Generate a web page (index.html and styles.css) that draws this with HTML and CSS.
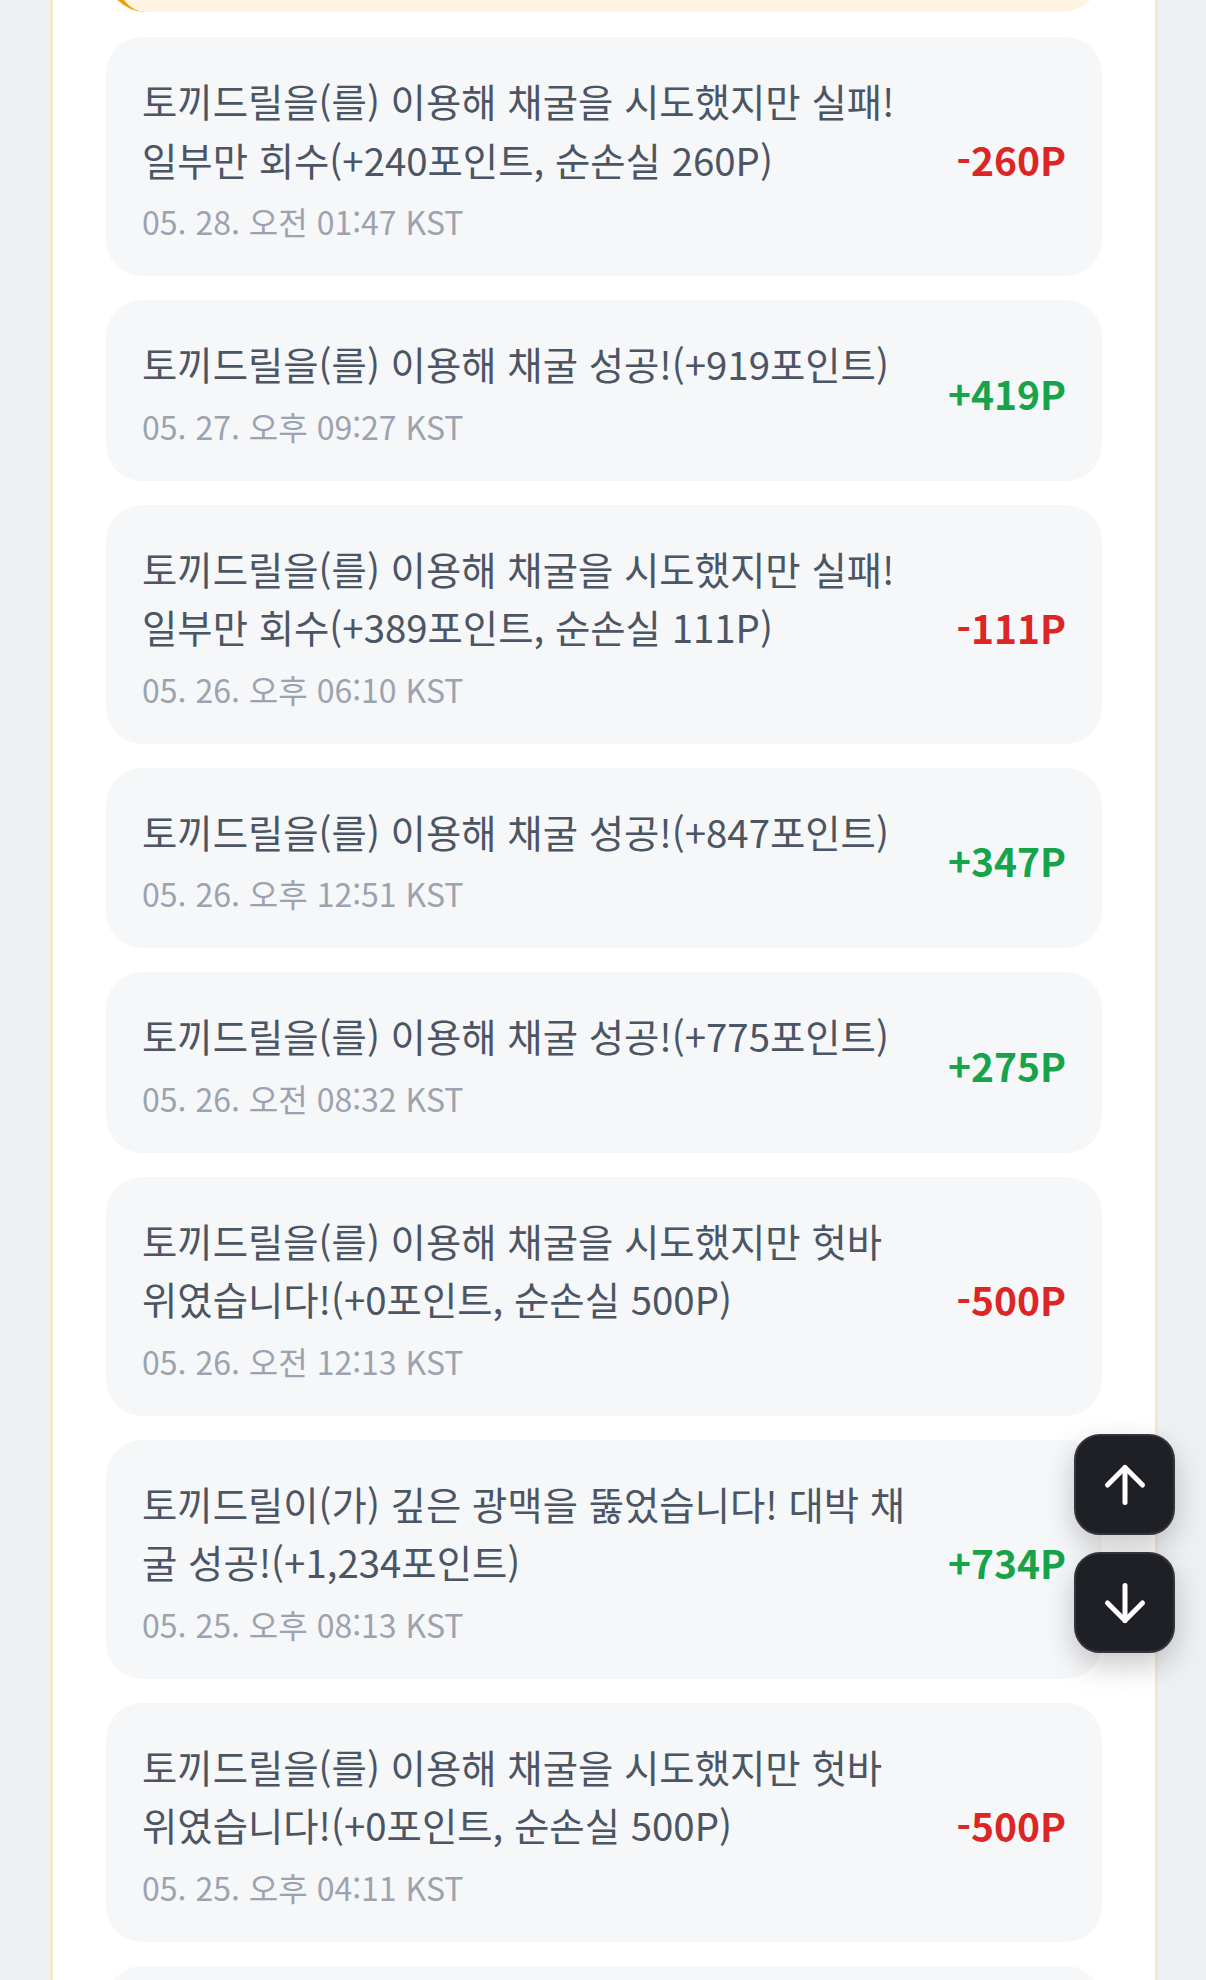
FILE: index.html
```html
<!DOCTYPE html>
<html lang="ko">
<head>
<meta charset="utf-8">
<title>채굴 기록</title>
<link rel="stylesheet" href="styles.css">
</head>
<body>
<div class="panel">
  <div class="summary"></div>
  <ul class="log">
    <li class="item">
      <div class="info">
        <p class="msg">토끼드릴을(를) 이용해 채굴을 시도했지만 실패! 일부만 회수(+240포인트, 순손실 260P)</p>
        <p class="time">05. 28. 오전 01:47 KST</p>
      </div>
      <span class="amount minus">-260P</span>
    </li>
    <li class="item">
      <div class="info">
        <p class="msg">토끼드릴을(를) 이용해 채굴 성공!(+919포인트)</p>
        <p class="time">05. 27. 오후 09:27 KST</p>
      </div>
      <span class="amount plus">+419P</span>
    </li>
    <li class="item">
      <div class="info">
        <p class="msg">토끼드릴을(를) 이용해 채굴을 시도했지만 실패! 일부만 회수(+389포인트, 순손실 111P)</p>
        <p class="time">05. 26. 오후 06:10 KST</p>
      </div>
      <span class="amount minus">-111P</span>
    </li>
    <li class="item">
      <div class="info">
        <p class="msg">토끼드릴을(를) 이용해 채굴 성공!(+847포인트)</p>
        <p class="time">05. 26. 오후 12:51 KST</p>
      </div>
      <span class="amount plus">+347P</span>
    </li>
    <li class="item">
      <div class="info">
        <p class="msg">토끼드릴을(를) 이용해 채굴 성공!(+775포인트)</p>
        <p class="time">05. 26. 오전 08:32 KST</p>
      </div>
      <span class="amount plus">+275P</span>
    </li>
    <li class="item">
      <div class="info">
        <p class="msg">토끼드릴을(를) 이용해 채굴을 시도했지만 헛바위였습니다!(+0포인트, 순손실 500P)</p>
        <p class="time">05. 26. 오전 12:13 KST</p>
      </div>
      <span class="amount minus">-500P</span>
    </li>
    <li class="item">
      <div class="info">
        <p class="msg">토끼드릴이(가) 깊은 광맥을 뚫었습니다! 대박 채굴 성공!(+1,234포인트)</p>
        <p class="time">05. 25. 오후 08:13 KST</p>
      </div>
      <span class="amount plus">+734P</span>
    </li>
    <li class="item">
      <div class="info">
        <p class="msg">토끼드릴을(를) 이용해 채굴을 시도했지만 헛바위였습니다!(+0포인트, 순손실 500P)</p>
        <p class="time">05. 25. 오후 04:11 KST</p>
      </div>
      <span class="amount minus">-500P</span>
    </li>
    <li class="item">
      <div class="info">
        <p class="msg">토끼드릴을(를) 이용해 채굴 성공!(+688포인트)</p>
        <p class="time">05. 25. 오전 10:02 KST</p>
      </div>
      <span class="amount plus">+188P</span>
    </li>
  </ul>
</div>

<div class="scroll-btns">
  <button class="scroll-btn" type="button" aria-label="맨 위로">
    <svg viewBox="0 0 24 24" fill="none" stroke="currentColor" stroke-width="2" stroke-linecap="round" stroke-linejoin="round"><path d="m5 12 7-7 7 7"/><path d="M12 19V5"/></svg>
  </button>
  <button class="scroll-btn" type="button" aria-label="맨 아래로">
    <svg viewBox="0 0 24 24" fill="none" stroke="currentColor" stroke-width="2" stroke-linecap="round" stroke-linejoin="round"><path d="M12 5v14"/><path d="m19 12-7 7-7-7"/></svg>
  </button>
</div>
</body>
</html>
```

FILE: styles.css
```css
* { box-sizing: border-box; }

html, body {
  margin: 0;
  padding: 0;
  height: 100%;
  overflow: hidden;
}

body {
  background: #eef0f3;
  font-family: "Noto Sans CJK KR", "Noto Sans", sans-serif;
  color: #4b5563;
}

.panel {
  width: 1108px;
  margin: 0 0 0 50px;
  min-height: 2000px;
  background: #ffffff;
  border-left: 3px solid #f8e7cf;
  border-right: 3px solid #f8e7cf;
  padding: 0 53px;
}

.summary {
  height: 120px;
  margin-top: -108px;
  background: #fff4e4;
  border-left: 9px solid #f59e0b;
  border-radius: 40px;
}

.log {
  list-style: none;
  margin: 25px 0 0;
  padding: 0;
  display: flex;
  flex-direction: column;
  gap: 24px;
}

.item {
  display: flex;
  align-items: center;
  background: #f6f7f9;
  border-radius: 36px;
  padding: 34px 36px;
}

.info {
  flex: 1;
  min-width: 0;
}

.msg {
  margin: 0;
  font-size: 38.4px;
  line-height: 58.5px;
  color: #4b5563;
}

.time {
  margin: 12px 0 0;
  font-size: 32px;
  line-height: 42px;
  color: #9ca3af;
}

.amount {
  flex: none;
  margin-left: 42px;
  font-size: 39px;
  font-weight: 700;
  line-height: 1;
  position: relative;
  top: 3px;
}

.amount.plus { color: #16a34a; }
.amount.minus { color: #dc2626; }

.scroll-btns {
  position: fixed;
  right: 31px;
  top: 1434px;
  display: flex;
  flex-direction: column;
  gap: 17px;
}

.scroll-btn {
  width: 101px;
  height: 101px;
  display: flex;
  align-items: center;
  justify-content: center;
  padding: 0;
  background: #1f2026;
  color: #ffffff;
  border: 2px solid #34353c;
  border-radius: 26px;
  box-shadow: 0 12px 30px rgba(0, 0, 0, 0.22);
}

.scroll-btn svg {
  width: 60px;
  height: 60px;
}
```
